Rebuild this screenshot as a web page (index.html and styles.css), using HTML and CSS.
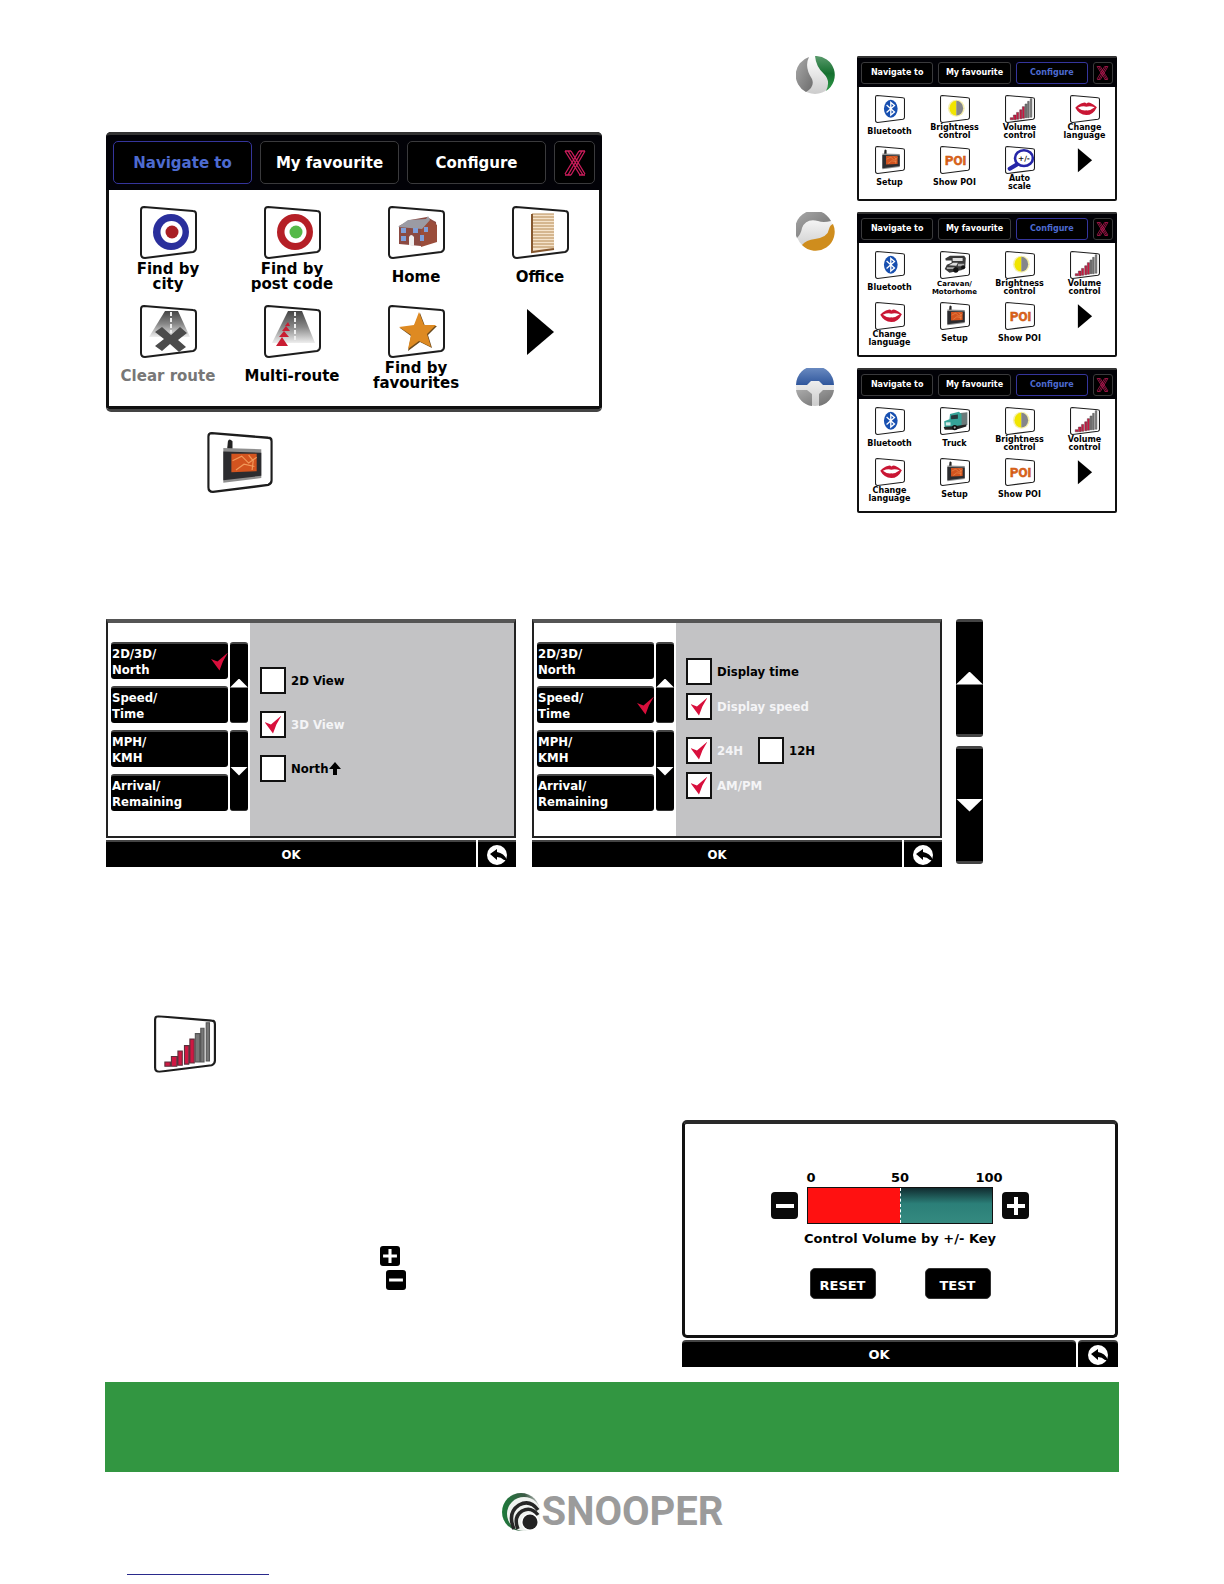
FILE: index.html
```html
<!DOCTYPE html>
<html lang="en">
<head>
<meta charset="utf-8">
<meta name="viewport" content="width=device-width, initial-scale=1">
<title>Snooper</title>
<link rel="stylesheet" href="styles.css">
</head>
<body>
<svg class="defs" aria-hidden="true">
  <defs>
    <linearGradient id="road" x1="0" y1="0" x2="0" y2="1"><stop offset="0" stop-color="#444"/><stop offset=".5" stop-color="#888"/><stop offset="1" stop-color="#eee"/></linearGradient>
    <linearGradient id="ball-grey" x1="0" y1="0" x2="1" y2="1"><stop offset="0" stop-color="#aaa"/><stop offset="1" stop-color="#6c6c6c"/></linearGradient>
    <linearGradient id="ball-white" x1="0" y1="0" x2="0" y2="1"><stop offset="0" stop-color="#fff"/><stop offset="1" stop-color="#ccc"/></linearGradient>
    <linearGradient id="ball-green" x1="0" y1="0" x2="0" y2="1"><stop offset="0" stop-color="#5a9a6c"/><stop offset=".5" stop-color="#15702f"/><stop offset="1" stop-color="#2f9a48"/></linearGradient>
    <linearGradient id="ball-blue" x1="0" y1="0" x2="0" y2="1"><stop offset="0" stop-color="#6f8fc4"/><stop offset="1" stop-color="#2f569c"/></linearGradient>
    <linearGradient id="logo-rim" x1="0" y1="0" x2="1" y2="0"><stop offset="0" stop-color="#1c7a3a"/><stop offset=".6" stop-color="#3b5a45"/><stop offset="1" stop-color="#ccc"/></linearGradient>
  </defs>
  <symbol id="frame" viewBox="0 0 57 53"><path d="M4 1 L53 5 Q56 5 56 8 V42 Q56 45 53 46 L5 52 Q1 52 1 48 V4 Q1 1 4 1Z" fill="#fff" stroke="#1d1d1d" stroke-width="2"/></symbol>
  <symbol id="i-city" viewBox="0 0 57 53"><use href="#frame"/><circle cx="31" cy="26" r="18" fill="#2a2f9c"/><circle cx="31.500" cy="26" r="11" fill="#fff"/><circle cx="32" cy="26" r="6.500" fill="#a81f24"/></symbol>
  <symbol id="i-post" viewBox="0 0 57 53"><use href="#frame"/><circle cx="31" cy="26" r="18" fill="#b51f26"/><circle cx="31.500" cy="26" r="11" fill="#fff"/><circle cx="32" cy="26" r="6.500" fill="#55b948"/></symbol>
  <symbol id="i-home" viewBox="0 0 57 53"><use href="#frame"/><path d="M11 20 L22 14 L39 11 L48 16 L49 35 L33 40 L11 38Z" fill="#8b4a42"/><path d="M33 22 L42 14 L49 19 V36 L33 41Z" fill="#9a4d3b"/><path d="M10 21 L20 14 L38 13 L40 10 L42 14 L34 23Z" fill="#9b9ba4"/><path d="M13 22h5v5h-5zM13 30h5v5h-5zM25 22h5v5h-5zM32 29h4v6h-4zM36 21h4v5h-4z" fill="#7e9fda"/><path d="M21 39V31q2-4 5 0V40Z" fill="#eee"/></symbol>
  <symbol id="i-office" viewBox="0 0 57 53"><use href="#frame"/><path d="M20 8 L42 8 L42 43 L20 46Z" fill="#f5e3cb"/><path d="M20 8H42M20 11H42M20 14H42M20 17H42M20 20H42M20 23H42M20 26H42M20 29H42M20 32H42M20 35H42M20 38H42M20 41H42" stroke="#b58a55"/><path d="M20 8V46L42 43" stroke="#86582f" stroke-width="2" fill="none"/></symbol>
  <symbol id="i-clear" viewBox="0 0 57 53"><use href="#frame"/><path d="M25 6H38L50 32H9Z" fill="url(#road)"/><path d="M31 7V28" stroke="#eee" stroke-width="2" stroke-dasharray="4 2"/><path d="M15 27L22 22L31 30L40 22L47 28L38 35L46 42L39 47L30 39L22 46L15 41L24 34Z" fill="#4b4b4b"/></symbol>
  <symbol id="i-multi" viewBox="0 0 57 53"><use href="#frame"/><path d="M24 6H38L51 38H8Z" fill="url(#road)"/><path d="M31 7V36" stroke="#eee" stroke-width="2" stroke-dasharray="4 2"/><path d="M12 41L18 32L24 41ZM15 32L20 26L25 32ZM18 26L22 21L26 26ZM21 21L24 17L26 21Z" fill="#c91d32"/></symbol>
  <symbol id="i-fav" viewBox="0 0 57 53"><use href="#frame"/><path d="M32 8L37 21L49 21L40 30L44 43L32 37L20 46L23 31L12 23L26 21Z" fill="#6b4a1e"/><path d="M31 7L36 20L48 20L39 29L43 42L31 36L20 44L23 30L11 22L26 20Z" fill="#de8a22"/></symbol>
  <symbol id="i-bt" viewBox="0 0 57 53"><use href="#frame"/><ellipse cx="30" cy="26" rx="13" ry="17" fill="#174fb0"/><path d="M22 19L37 32L30 38V14L37 20L22 33" fill="none" stroke="#fff" stroke-width="2.500"/></symbol>
  <symbol id="i-bright" viewBox="0 0 57 53"><use href="#frame"/><circle cx="31" cy="25" r="16" fill="#f5efb0"/><path d="M31 11A13 14 0 0 0 31 39Z" fill="#f1e500"/><path d="M31 11A13 14 0 0 1 31 39Z" fill="#85868b"/></symbol>
  <symbol id="i-vol" viewBox="0 0 57 53"><use href="#frame"/><path d="M10 43h5v4h-5zM16 38h5v9h-5zM22 33h4v13h-4zM28 28h4v17h-4zM33 22h4v22h-4z" fill="#cf1742" stroke="#59323c"/><path d="M38 17h4v26h-4zM43 12h3v31h-3zM48 7h3v35h-3z" fill="#777" stroke="#555"/></symbol>
  <symbol id="i-lips" viewBox="0 0 57 53"><use href="#frame"/><path d="M10 24Q18 16 24 15Q29 13 31 16Q35 13 39 15Q45 18 51 23Q44 38 31 38Q17 37 10 24Z" fill="#c91634"/><path d="M15 24Q24 20 31 22Q38 20 47 23Q38 30 31 29Q22 30 15 24Z" fill="#fff"/></symbol>
  <symbol id="i-setup" viewBox="0 0 57 53"><use href="#frame"/><path d="M18 8Q19 5 22 8V18H17Z" fill="#222"/><path d="M14 14L47 15V40L14 44Z" fill="#8f8f8f"/><path d="M14 17L47 18V38L14 42Z" fill="#2c2c2f"/><path d="M21 19H43V34L21 35Z" fill="#d3541f"/><path d="M22 25l8-4l6 6l7-5M25 33l7-5l9 2M36 20l4 5l-1 8" stroke="#f29a5b" fill="none"/></symbol>
  <symbol id="i-lens" viewBox="0 0 57 53"><use href="#frame"/><path d="M24 34L9 43" stroke="#2626a8" stroke-width="8" stroke-linecap="round"/><ellipse cx="36" cy="23" rx="17" ry="15" fill="#fff" stroke="#2626a8" stroke-width="5"/></symbol>
  <symbol id="i-caravan" viewBox="0 0 57 53"><use href="#frame"/><path d="M10 14L19 9H46L49 13L48 30L42 36L18 41L9 34L13 26L22 22V18H11Z" fill="#393939"/><path d="M24 13H43V19H24ZM17 27L25 22H34L31 28Z" fill="#ddd"/><path d="M13 31H28V34H13ZM34 24H46V29H34Z" fill="#aaa"/><circle cx="30" cy="36" r="5" fill="#111"/><circle cx="44" cy="31" r="4" fill="#111"/></symbol>
  <symbol id="i-truck" viewBox="0 0 57 53"><use href="#frame"/><path d="M34 12L52 10V34L35 38Z" fill="#6c7a7a"/><path d="M19 13L36 9L41 14V36L9 40L8 27L18 23Z" fill="#35a398"/><path d="M21 16L34 14V22L21 23Z" fill="#26383b"/><path d="M11 29H20V35H11Z" fill="#d4e9e6"/><path d="M7 38L30 36L50 33V37L30 43H9Z" fill="#222"/><circle cx="28" cy="39" r="5" fill="#111"/><circle cx="28" cy="39" r="2" fill="#aaa"/></symbol>
  <symbol id="i-next" viewBox="0 0 57 53"><path d="M15 4L42 27L15 50Z" fill="#000"/></symbol>
  <symbol id="i-close" viewBox="0 0 24 26"><path d="M2 1L17 25M5 1L20 25M8 1L22 24M22 1L8 25M19 1L5 25M16 1L2 24M2 1H8M16 1H22M2 25H8M16 25H22" fill="none" stroke="#cc1c5b" stroke-width="1.300"/></symbol>
  <symbol id="i-back" viewBox="0 0 20 20"><circle cx="10" cy="10" r="10" fill="#fff"/><path d="M3 9L10 4V7Q17 8 20 15H17Q14 12 10 12V15Z" fill="#000"/></symbol>
  <symbol id="i-plus" viewBox="0 0 26 26"><path d="M11 4H15V11H22V15H15V22H11V15H4V11H11Z" fill="#fff"/></symbol>
  <symbol id="i-minus" viewBox="0 0 26 26"><path d="M4 11H22V15H4Z" fill="#fff"/></symbol>
</svg>

<main class="page">
  <section class="menus">
    <div class="menu-main">
      <div class="screen screen-large">
        <nav class="tabs">
          <button class="tab tab-on">Navigate to</button><button class="tab">My favourite</button><button class="tab">Configure</button>
          <button class="tab close" aria-label="Close"><svg><use href="#i-close"/></svg></button>
        </nav>
        <div class="tiles">
          <button class="tile"><svg><use href="#i-city"/></svg><span>Find by<br>city</span></button>
          <button class="tile"><svg><use href="#i-post"/></svg><span>Find by<br>post code</span></button>
          <button class="tile"><svg><use href="#i-home"/></svg><span>Home</span></button>
          <button class="tile"><svg><use href="#i-office"/></svg><span>Office</span></button>
          <button class="tile tile-off"><svg><use href="#i-clear"/></svg><span>Clear route</span></button>
          <button class="tile"><svg><use href="#i-multi"/></svg><span>Multi-route</span></button>
          <button class="tile"><svg><use href="#i-fav"/></svg><span>Find by<br>favourites</span></button>
          <button class="tile" aria-label="Next"><svg><use href="#i-next"/></svg></button>
        </div>
      </div>
      <svg class="setup-icon"><use href="#i-setup"/></svg>
    </div>

    <div class="models">
      <div class="model">
        <svg class="ball" viewBox="0 0 39 39"><circle cx="19" cy="19" r="19" fill="url(#ball-white)"/><path d="M13 1A19 19 0 0 0 10 36Q19 31 16 23Q8 11 13 1Z" fill="url(#ball-grey)"/><path d="M19 0A19 19 0 0 1 30 35Q35 25 28 18Q20 11 19 0Z" fill="url(#ball-green)"/></svg>
        <div class="screen screen-small">
          <nav class="tabs">
            <button class="tab">Navigate to</button><button class="tab">My favourite</button><button class="tab tab-on">Configure</button>
            <button class="tab close" aria-label="Close"><svg><use href="#i-close"/></svg></button>
          </nav>
          <div class="tiles">
            <button class="tile"><svg><use href="#i-bt"/></svg><span>Bluetooth</span></button>
            <button class="tile"><svg><use href="#i-bright"/></svg><span>Brightness<br>control</span></button>
            <button class="tile"><svg><use href="#i-vol"/></svg><span>Volume<br>control</span></button>
            <button class="tile"><svg><use href="#i-lips"/></svg><span>Change<br>language</span></button>
            <button class="tile"><svg><use href="#i-setup"/></svg><span>Setup</span></button>
            <button class="tile"><svg viewBox="0 0 57 53"><use href="#frame"/><text x="30" y="36" text-anchor="middle" class="poi-text">POI</text></svg><span>Show POI</span></button>
            <button class="tile"><svg viewBox="0 0 57 53"><use href="#i-lens"/><text x="36" y="28" text-anchor="middle" class="scale-text">+/-</text></svg><span>Auto<br>scale</span></button>
            <button class="tile" aria-label="Next"><svg><use href="#i-next"/></svg></button>
          </div>
        </div>
      </div>
      <div class="model">
        <svg class="ball" viewBox="0 0 39 39"><circle cx="19" cy="19" r="19" fill="url(#ball-white)"/><path d="M1 26A19 19 0 0 1 35 9Q27 11 22 9Q10 6 6 16Q5 22 1 26Z" fill="url(#ball-grey)"/><path d="M37 12A19 19 0 0 1 6 33Q10 28 19 27Q32 25 33 17Q34 13 37 12Z" fill="#cf8d1d"/></svg>
        <div class="screen screen-small">
          <nav class="tabs">
            <button class="tab">Navigate to</button><button class="tab">My favourite</button><button class="tab tab-on">Configure</button>
            <button class="tab close" aria-label="Close"><svg><use href="#i-close"/></svg></button>
          </nav>
          <div class="tiles">
            <button class="tile"><svg><use href="#i-bt"/></svg><span>Bluetooth</span></button>
            <button class="tile"><svg><use href="#i-caravan"/></svg><span class="tiny">Caravan/<br>Motorhome</span></button>
            <button class="tile"><svg><use href="#i-bright"/></svg><span>Brightness<br>control</span></button>
            <button class="tile"><svg><use href="#i-vol"/></svg><span>Volume<br>control</span></button>
            <button class="tile"><svg><use href="#i-lips"/></svg><span>Change<br>language</span></button>
            <button class="tile"><svg><use href="#i-setup"/></svg><span>Setup</span></button>
            <button class="tile"><svg viewBox="0 0 57 53"><use href="#frame"/><text x="30" y="36" text-anchor="middle" class="poi-text">POI</text></svg><span>Show POI</span></button>
            <button class="tile" aria-label="Next"><svg><use href="#i-next"/></svg></button>
          </div>
        </div>
      </div>
      <div class="model">
        <svg class="ball" viewBox="0 0 39 39"><circle cx="19" cy="19" r="19" fill="url(#ball-white)"/><path d="M0 17A19 19 0 0 1 38 17H27L23 13H15L11 17Z" fill="url(#ball-blue)"/><path d="M0 22A19 19 0 0 0 16 38V26L11 22ZM38 22A19 19 0 0 1 23 38V26L27 22Z" fill="url(#ball-grey)"/></svg>
        <div class="screen screen-small">
          <nav class="tabs">
            <button class="tab">Navigate to</button><button class="tab">My favourite</button><button class="tab tab-on">Configure</button>
            <button class="tab close" aria-label="Close"><svg><use href="#i-close"/></svg></button>
          </nav>
          <div class="tiles">
            <button class="tile"><svg><use href="#i-bt"/></svg><span>Bluetooth</span></button>
            <button class="tile"><svg><use href="#i-truck"/></svg><span>Truck</span></button>
            <button class="tile"><svg><use href="#i-bright"/></svg><span>Brightness<br>control</span></button>
            <button class="tile"><svg><use href="#i-vol"/></svg><span>Volume<br>control</span></button>
            <button class="tile"><svg><use href="#i-lips"/></svg><span>Change<br>language</span></button>
            <button class="tile"><svg><use href="#i-setup"/></svg><span>Setup</span></button>
            <button class="tile"><svg viewBox="0 0 57 53"><use href="#frame"/><text x="30" y="36" text-anchor="middle" class="poi-text">POI</text></svg><span>Show POI</span></button>
            <button class="tile" aria-label="Next"><svg><use href="#i-next"/></svg></button>
          </div>
        </div>
      </div>
    </div>
  </section>

  <section class="settings">
    <div class="dialog">
      <div class="dialog-body">
        <div class="side">
          <div class="side-list">
            <button class="side-item side-on">2D/3D/<br>North</button>
            <button class="side-item">Speed/<br>Time</button>
            <button class="side-item">MPH/<br>KMH</button>
            <button class="side-item">Arrival/<br>Remaining</button>
          </div>
          <div class="scroll"><button class="up" aria-label="Up"></button><button class="down" aria-label="Down"></button></div>
        </div>
        <div class="options options-wide">
          <label class="option"><input type="checkbox"><span>2D View</span></label>
          <label class="option"><input type="checkbox" checked><span>3D View</span></label>
          <label class="option"><input type="checkbox"><span>North<svg class="north" viewBox="0 0 12 13"><path d="M6 0L12 7H8V13H4V7H0Z"/></svg></span></label>
        </div>
      </div>
      <div class="dialog-foot"><button class="ok">OK</button><button class="back" aria-label="Back"><svg><use href="#i-back"/></svg></button></div>
    </div>

    <div class="dialog">
      <div class="dialog-body">
        <div class="side">
          <div class="side-list">
            <button class="side-item">2D/3D/<br>North</button>
            <button class="side-item side-on">Speed/<br>Time</button>
            <button class="side-item">MPH/<br>KMH</button>
            <button class="side-item">Arrival/<br>Remaining</button>
          </div>
          <div class="scroll"><button class="up" aria-label="Up"></button><button class="down" aria-label="Down"></button></div>
        </div>
        <div class="options">
          <div class="pair">
            <label class="option"><input type="checkbox"><span>Display time</span></label>
            <label class="option"><input type="checkbox" checked><span>Display speed</span></label>
          </div>
          <div class="pair">
            <div class="line">
              <label class="option"><input type="checkbox" checked><span>24H</span></label>
              <label class="option"><input type="checkbox"><span>12H</span></label>
            </div>
            <label class="option"><input type="checkbox" checked><span>AM/PM</span></label>
          </div>
        </div>
      </div>
      <div class="dialog-foot"><button class="ok">OK</button><button class="back" aria-label="Back"><svg><use href="#i-back"/></svg></button></div>
    </div>

    <div class="scroll scroll-large"><button class="up" aria-label="Up"></button><button class="down" aria-label="Down"></button></div>
  </section>

  <svg class="volume-icon"><use href="#i-vol"/></svg>

  <section class="volume">
    <div class="keys">
      <svg class="key"><use href="#i-plus"/></svg>
      <svg class="key key-minus"><use href="#i-minus"/></svg>
    </div>
    <div class="volume-dialog">
      <div class="volume-body">
        <div class="level">
          <button class="step" aria-label="Minus"><svg><use href="#i-minus"/></svg></button>
          <div class="gauge">
            <div class="marks"><span>0</span><span>50</span><span>100</span></div>
            <input id="level" class="range" type="range" min="0" max="100" value="50">
          </div>
          <button class="step" aria-label="Plus"><svg><use href="#i-plus"/></svg></button>
        </div>
        <label class="hint" for="level">Control Volume by +/- Key</label>
        <div class="actions"><button>RESET</button><button>TEST</button></div>
      </div>
      <div class="dialog-foot"><button class="ok">OK</button><button class="back" aria-label="Back"><svg><use href="#i-back"/></svg></button></div>
    </div>
  </section>

  <div class="banner"></div>

  <footer class="footer">
    <div class="logo">
      <svg viewBox="0 0 38 38"><circle cx="19" cy="19" r="19" fill="url(#logo-rim)"/><circle cx="22" cy="21" r="17" fill="#f0f3f0"/><g fill="none" stroke="#262626" stroke-width="3.500"><path d="M12 36Q5 20 17 12Q28 6 36 17"/><path d="M16 36Q11 24 20 18Q29 13 36 22"/></g><circle cx="28" cy="29" r="9" fill="#fff"/><circle cx="28" cy="29" r="7.500" fill="#222"/></svg>
      <span>SNOOPER</span>
    </div>
    <hr class="rule">
  </footer>
</main>
</body>
</html>
```
FILE: styles.css
```css
* { box-sizing: border-box; }
body {
  margin: 0;
  background: #fff;
  color: #000;
  font-family: "DejaVu Sans", sans-serif;
  font-weight: 700;
}
button {
  margin: 0;
  padding: 0;
  border: 0;
  background: none;
  color: inherit;
  font: inherit;
}
svg { display: block; }
.defs { position: absolute; width: 0; height: 0; }
.poi-text { font: 700 25px Roboto, sans-serif; fill: #e2661b; stroke: #c4520f; }
.scale-text { font: 700 14px "DejaVu Sans", sans-serif; fill: #111; }

.page { padding: 56px 105px 8px; }

/* Menu screens */
.menus { display: flex; justify-content: space-between; padding: 0 2px 0 1px; }
.menu-main { flex: 0 1 496px; padding-top: 76px; }
.screen {
  background: #fff;
  border-radius: 5px;
  box-shadow: inset 0 0 0 3px #101010;
}
.tabs {
  display: flex;
  align-items: center;
  background: #020207;
  border-radius: 5px 5px 0 0;
  color: #fff;
}
.tab {
  flex: 1;
  border: 1px solid #3a3a3c;
  border-radius: 5px;
  background: #000;
}
.tab-on { border-color: #35359c; color: #4d6bd0; }
.close { display: grid; place-items: center; }
.tiles { display: grid; grid-template-columns: repeat(4, 1fr); }
.tile { display: flex; flex-direction: column; align-items: center; }
.tile span { display: grid; place-items: center; text-align: center; white-space: nowrap; }
.tile-off { color: #777; }

.screen-large { border-bottom: 3px solid #444; font-size: 15px; }
.screen-large .tabs { height: 58px; padding: 0 7px; gap: 8px; border-top: 3px solid #333; }
.screen-large .tab { height: 43px; }
.screen-large .close { flex: 0 0 41px; }
.screen-large .close svg { width: 24px; height: 26px; }
.screen-large .tiles { padding: 16px 0 15px; row-gap: 10px; }
.screen-large .tile svg { width: 57px; height: 53px; }
.screen-large .tile span { height: 36px; line-height: 15px; }

.setup-icon { width: 66px; height: 61px; margin: 20px 0 0 101px; }

.models { display: flex; flex-direction: column; gap: 11px; }
.model { display: flex; gap: 22px; align-items: flex-start; }
.ball { width: 39px; height: 39px; }
.screen-small { width: 260px; height: 145px; font-size: 8px; box-shadow: inset 0 0 0 2px #101010; border-radius: 2px; }
.screen-small .tabs { height: 31px; padding: 0 4px; gap: 5px; border-top: 2px solid #333; border-radius: 2px 2px 0 0; }
.screen-small .tab { height: 22px; border-radius: 3px; }
.screen-small .close { flex: 0 0 20px; }
.screen-small .close svg { width: 13px; height: 14px; }
.screen-small .tiles { padding-top: 8px; row-gap: 5px; }
.screen-small .tile svg { width: 30px; height: 28px; }
.screen-small .tile span { height: 18px; line-height: 8px; }
.screen-small .tile .tiny { font-size: 7px; }

/* Settings dialogs */
.settings {
  display: flex;
  align-items: flex-start;
  margin: 106px 0 0 1px;
  font-family: "DejaVu Sans Condensed", "DejaVu Sans", sans-serif;
  font-size: 13px;
}
.dialog { flex: 0 1 410px; margin-right: 16px; }
.dialog-body {
  display: flex;
  height: 219px;
  border: 2px solid #222;
  border-top: 4px solid #555;
  background: #c3c3c5;
}
.side { display: flex; gap: 2px; flex: 0 0 142px; padding: 19px 2px 0 3px; background: #fff; }
.side-list { display: flex; flex-direction: column; gap: 7px; flex: 1; }
.side-item {
  height: 37px;
  padding-left: 1px;
  border-top: 2px solid #444;
  border-radius: 3px;
  background: #000;
  color: #fff;
  line-height: 16px;
  text-align: left;
}
.side-on { display: flex; justify-content: space-between; align-items: center; }
.side-on::after, .option input:checked::before {
  content: "";
  width: 17px;
  height: 18px;
  background: #d80f3c;
  clip-path: polygon(0 36%, 38% 50%, 100% 0, 70% 50%, 50% 100%);
}
.scroll { display: flex; flex-direction: column; gap: 7px; flex: 0 0 18px; }
.scroll button {
  display: grid;
  place-items: center;
  height: 81px;
  border-top: 2px solid #444;
  border-bottom: 1px solid #333;
  border-radius: 3px;
  background: #000;
}
.scroll button::before { content: ""; width: 100%; height: 9px; background: #fff; }
.scroll .up::before { clip-path: polygon(50% 0, 100% 100%, 0 100%); }
.scroll .down::before { clip-path: polygon(0 0, 100% 0, 50% 100%); }
.options { display: flex; flex-direction: column; gap: 17px; padding: 35px 0 0 10px; }
.options-wide { padding-top: 44px; }
.pair { display: flex; flex-direction: column; gap: 8px; }
.line { display: flex; gap: 15px; }
.option { display: flex; align-items: center; gap: 5px; }
.option span { display: flex; align-items: center; }
.option input {
  appearance: none;
  display: grid;
  place-items: center;
  width: 26px;
  height: 27px;
  margin: 0;
  border: 2px solid #111;
  background: #fff;
}
.option input:checked + span { color: #f4f4f6; }
.north { width: 12px; height: 13px; }
.dialog-foot { display: flex; gap: 2px; height: 27px; margin-top: 2px; }
.dialog-foot button { border-top: 2px solid #444; background: #000; color: #fff; }
.ok { flex: 1; }
.back { display: grid; place-items: center; flex: 0 0 38px; }
.back svg { width: 20px; height: 20px; }
.scroll-large { flex: 0 0 27px; gap: 9px; margin-left: -2px; }
.scroll-large button { height: 118px; border-top-width: 3px; border-bottom: 3px solid #444; }
.scroll-large button::before { height: 13px; }

/* Volume */
.volume-icon { width: 62px; height: 58px; margin: 148px 0 0 49px; }
.volume { display: flex; justify-content: space-between; margin-top: 47px; padding-right: 1px; }
.keys { display: flex; flex-direction: column; gap: 4px; padding: 126px 0 0 275px; }
.key { width: 20px; height: 20px; border-radius: 3px; background: #000; }
.key-minus { margin-left: 6px; }
.volume-dialog { flex: 0 1 436px; }
.volume-body {
  display: flex;
  flex-direction: column;
  align-items: center;
  height: 218px;
  padding-top: 46px;
  border: 3px solid #111;
  border-top: 4px solid #2a2a2a;
  border-radius: 5px;
  font-size: 13px;
}
.level { display: flex; align-items: flex-end; gap: 9px; }
.step { display: grid; place-items: center; width: 27px; height: 27px; margin-bottom: 5px; border-radius: 4px; background: #0a0a0a; }
.step svg { width: 26px; height: 26px; }
.gauge { width: 186px; }
.marks { display: flex; justify-content: space-between; height: 17px; margin: 0 -10px; line-height: 16px; text-align: center; }
.marks span { width: 28px; }
.range {
  appearance: none;
  display: block;
  width: 100%;
  height: 37px;
  margin: 0;
  border: 1px solid #111;
  background: linear-gradient(#f11, #f11) 0 0 / 50% 100% no-repeat, linear-gradient(#112c30, #2b7f78 45%, #358a80);
}
.range::-webkit-slider-thumb { appearance: none; width: 1px; height: 35px; border-left: 1px dashed #fff; }
.hint { margin-top: 6px; line-height: 18px; }
.actions { display: flex; gap: 49px; margin-top: 20px; }
.actions button { width: 66px; height: 31px; padding-top: 3px; border: 1px solid #333; border-radius: 5px; background: #000; color: #fff; }
.volume .dialog-foot { font-size: 13px; }
.volume .dialog-foot button { border-radius: 4px 4px 0 0; }
.volume .back { flex-basis: 40px; }

.banner { height: 90px; margin-top: 15px; background: #329641; }

.footer { padding-top: 21px; }
.logo { display: flex; align-items: center; justify-content: center; gap: 2px; height: 38px; padding-left: 1px; }
.logo svg { width: 38px; height: 38px; }
.logo span { color: #9b9b9b; font: 700 40px/38px Roboto, sans-serif; }
.rule { width: 142px; height: 1px; margin: 43px 0 0 22px; border: 0; background: #2a2a8c; }
```
